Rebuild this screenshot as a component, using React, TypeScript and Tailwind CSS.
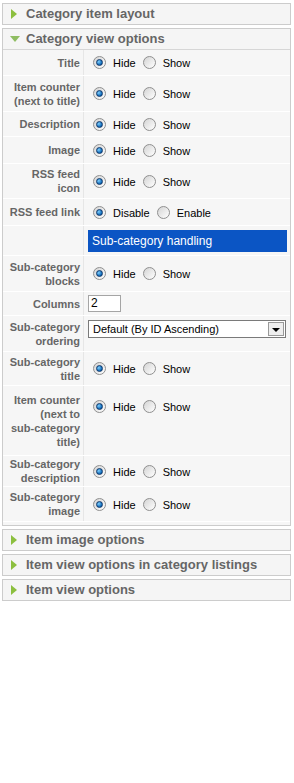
import React from 'react';

type Row = {
    label: string[];
    h: string;
    kind: 'radio' | 'link' | 'bar' | 'input' | 'select';
    pad?: string;
};

const rows: Row[] = [
    { label: ['Title'], h: 'h-[26px]', kind: 'radio' },
    { label: ['Item counter', '(next to title)'], h: 'h-[36px]', kind: 'radio' },
    { label: ['Description'], h: 'h-[25px]', kind: 'radio' },
    { label: ['Image'], h: 'h-[27px]', kind: 'radio' },
    { label: ['RSS feed', 'icon'], h: 'h-[35px]', kind: 'radio' },
    { label: ['RSS feed link'], h: 'h-[27px]', kind: 'link' },
    { label: [], h: 'h-[30px]', kind: 'bar' },
    { label: ['Sub-category', 'blocks'], h: 'h-[36px]', kind: 'radio' },
    { label: ['Columns'], h: 'h-[24px]', kind: 'input' },
    { label: ['Sub-category', 'ordering'], h: 'h-[36px]', kind: 'select', pad: 'justify-start pt-[4px]' },
    { label: ['Sub-category', 'title'], h: 'h-[34px]', kind: 'radio' },
    { label: ['Item counter', '(next to', 'sub-category', 'title)'], h: 'h-[70px]', kind: 'radio', pad: 'justify-start pt-[11px]' },
    { label: ['Sub-category', 'description'], h: 'h-[31px]', kind: 'radio' },
    { label: ['Sub-category', 'image'], h: 'h-[35px]', kind: 'radio' },
];

function Radio({ checked }: { checked?: boolean }) {
    return (
        <span className="w-[13px] h-[13px] rounded-full border border-[#8f8f8f] bg-gradient-to-br from-[#d4d4d4] to-[#ffffff] flex items-center justify-center shrink-0">
            {checked && (
                <span className="w-[7px] h-[7px] rounded-full bg-[radial-gradient(circle_at_35%_35%,#7fd0ff,#0a64b4_70%)] border border-[#10386a]" />
            )}
        </span>
    );
}

function Options({ a, b }: { a: string; b: string }) {
    return (
        <div className="flex items-center pl-[8px] text-[11px] text-black whitespace-nowrap">
            <Radio checked />
            <span className="ml-[7px] mr-[7px] pt-[2px]">{a}</span>
            <Radio />
            <span className="ml-[7px] pt-[2px]">{b}</span>
        </div>
    );
}

function Header({ title, open }: { title: string; open?: boolean }) {
    return (
        <div className="h-[20px] flex items-center bg-[#f5f5f5] px-[7px] whitespace-nowrap">
            {open ? (
                <span className="w-0 h-0 border-l-[5px] border-r-[5px] border-t-[6px] border-l-transparent border-r-transparent border-t-[#8fbd62] mr-[6px]" />
            ) : (
                <span className="w-0 h-0 border-t-[5px] border-b-[5px] border-l-[6px] border-t-transparent border-b-transparent border-l-[#8cbf3f] ml-[1px] mr-[9px]" />
            )}
            <span className="text-[13px] font-bold text-[#666]">{title}</span>
        </div>
    );
}

function Value({ row }: { row: Row }) {
    if (row.kind === 'radio') return <Options a="Hide" b="Show" />;
    if (row.kind === 'link') return <Options a="Disable" b="Enable" />;
    if (row.kind === 'bar')
        return (
            <div className="mx-[3px] h-[22px] bg-[#0b55c4] text-white text-[12px] flex items-center pl-[4px]">
                Sub-category handling
            </div>
        );
    if (row.kind === 'input')
        return (
            <div className="ml-[3px] w-[33px] h-[17px] bg-white border border-[#a5a5a5] text-[12px] pl-[2px] leading-[15px]">
                2
            </div>
        );
    return (
        <div className="ml-[3px] mr-[4px] h-[18px] bg-white border border-[#7a7a7a] flex items-center text-[11px]">
            <span className="flex-1 pl-[4px]">Default (By ID Ascending)</span>
            <span className="w-[16px] h-[14px] mr-[1px] border border-[#999] bg-[#eee] flex items-center justify-center">
                <span className="w-0 h-0 border-l-[4px] border-r-[4px] border-t-[4px] border-l-transparent border-r-transparent border-t-black mt-[2px]" />
            </span>
        </div>
    );
}

export default function App() {
    return (
        <div className="w-[294px] h-[783px] bg-white pt-[3px] px-[2px]" style={{ fontFamily: '"Liberation Sans", Arial, sans-serif' }}>
            <div className="w-[289px] border border-[#ccc]">
                <Header title="Category item layout" />
            </div>

            <div className="w-[289px] border border-[#ccc] mt-[3px] bg-[#f6f6f6]">
                <Header title="Category view options" open />
                <div className="border-t border-[#d6d6d6] pb-[3px]">
                    {rows.map((row, i) => (
                        <div key={i} className={`flex ${row.h} border-b border-white`}>
                            <div className="w-[81px] shrink-0 bg-[#f6f6f6] border-r border-[#e6e6e6] text-right pr-[3px] flex flex-col justify-center text-[11px] leading-[14px] font-bold text-[#666] whitespace-nowrap">
                                {row.label.map((l, j) => (
                                    <div key={j}>{l}</div>
                                ))}
                            </div>
                            <div className={`flex-1 flex flex-col ml-[1px] ${row.pad ?? 'justify-center'}`}>
                                <Value row={row} />
                            </div>
                        </div>
                    ))}
                </div>
            </div>

            <div className="w-[289px] border border-[#ccc] mt-[3px]">
                <Header title="Item image options" />
            </div>
            <div className="w-[289px] border border-[#ccc] mt-[3px]">
                <Header title="Item view options in category listings" />
            </div>
            <div className="w-[289px] border border-[#ccc] mt-[3px]">
                <Header title="Item view options" />
            </div>
        </div>
    );
}
